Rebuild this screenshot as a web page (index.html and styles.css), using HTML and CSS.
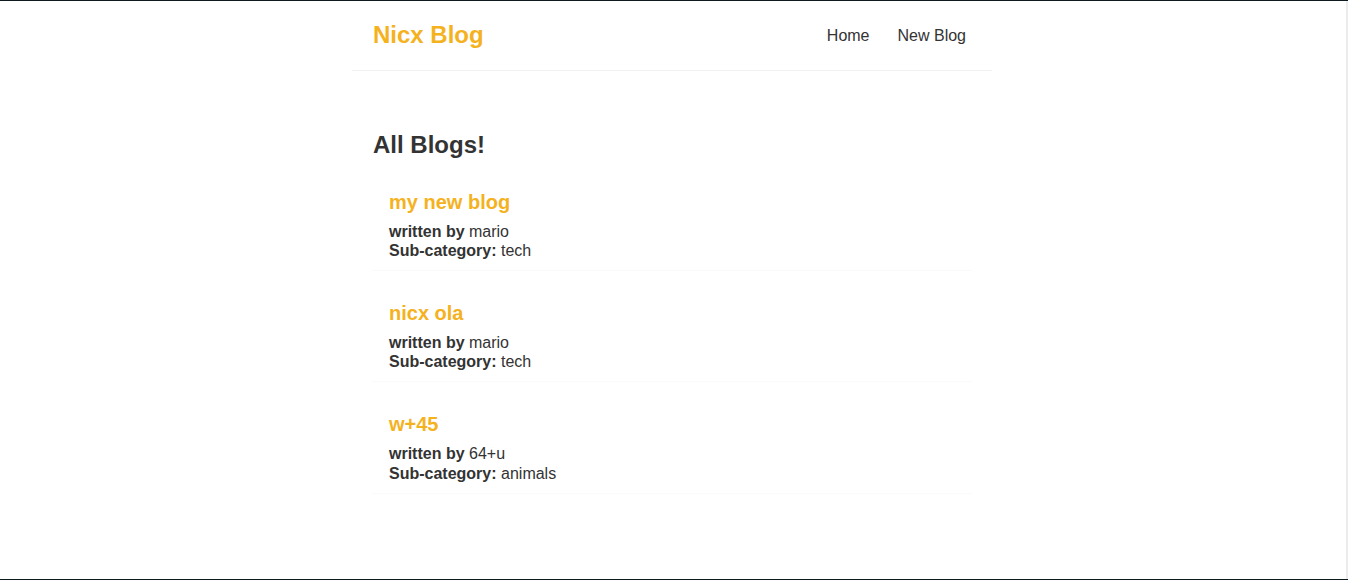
FILE: index.html
```html
<!DOCTYPE html>
<html lang="en">
<head>
<meta charset="utf-8">
<title>Nicx Blog</title>
<link rel="stylesheet" href="styles.css">
</head>
<body>
<div class="app">
  <nav class="navbar">
    <h1>Nicx Blog</h1>
    <div class="links"><a href="#">Home</a><a href="#">New Blog</a></div>
  </nav>
  <div class="content">
    <h2 class="page-title">All Blogs!</h2>
    <div class="blog-preview">
      <h2>my new blog</h2>
      <p><strong>written by</strong> mario</p>
      <p><strong>Sub-category:</strong> tech</p>
    </div>
    <div class="blog-preview">
      <h2>nicx ola</h2>
      <p><strong>written by</strong> mario</p>
      <p><strong>Sub-category:</strong> tech</p>
    </div>
    <div class="blog-preview">
      <h2>w+45</h2>
      <p><strong>written by</strong> 64+u</p>
      <p><strong>Sub-category:</strong> animals</p>
    </div>
  </div>
</div>
</body>
</html>
```

FILE: styles.css
```css
* {
  margin: 0;
  box-sizing: content-box;
}
html, body {
  height: 100%;
}
body {
  font-family: "Liberation Sans", Arial, sans-serif;
  line-height: 1.2;
  color: #333;
  background: #fff;
  border-top: 1px solid #0d1a20;
  border-bottom: 1px solid #0d1a20;
  box-sizing: border-box;
  overflow: hidden;
}
.app {
  height: 100%;
  padding-right: 2px;
  border-right: 2px solid #ececec;
  box-sizing: border-box;
}
.navbar {
  padding: 20px;
  display: flex;
  align-items: center;
  max-width: 600px;
  margin: 0 auto;
  border-bottom: 1px solid #f2f2f2;
}
.navbar h1 {
  color: #f5b21f;
  font-size: 24px;
  padding-left: 1px;
}
.navbar .links {
  margin-left: auto;
}
.navbar a {
  margin-left: 16px;
  text-decoration: none;
  padding: 6px;
  color: #333;
  font-size: 16px;
}
.content {
  max-width: 600px;
  margin: 40px auto;
  padding: 20px;
}
.page-title {
  font-size: 24px;
  padding-left: 1px;
}
.blog-preview {
  padding: 10px 16px 10px 17px;
  margin: 20px 0;
  border-bottom: 1px solid #fafafa;
}
.blog-preview h2 {
  font-size: 20px;
  color: #f5b21f;
  margin-bottom: 8px;
}
.blog-preview p {
  font-size: 16px;
}
```
